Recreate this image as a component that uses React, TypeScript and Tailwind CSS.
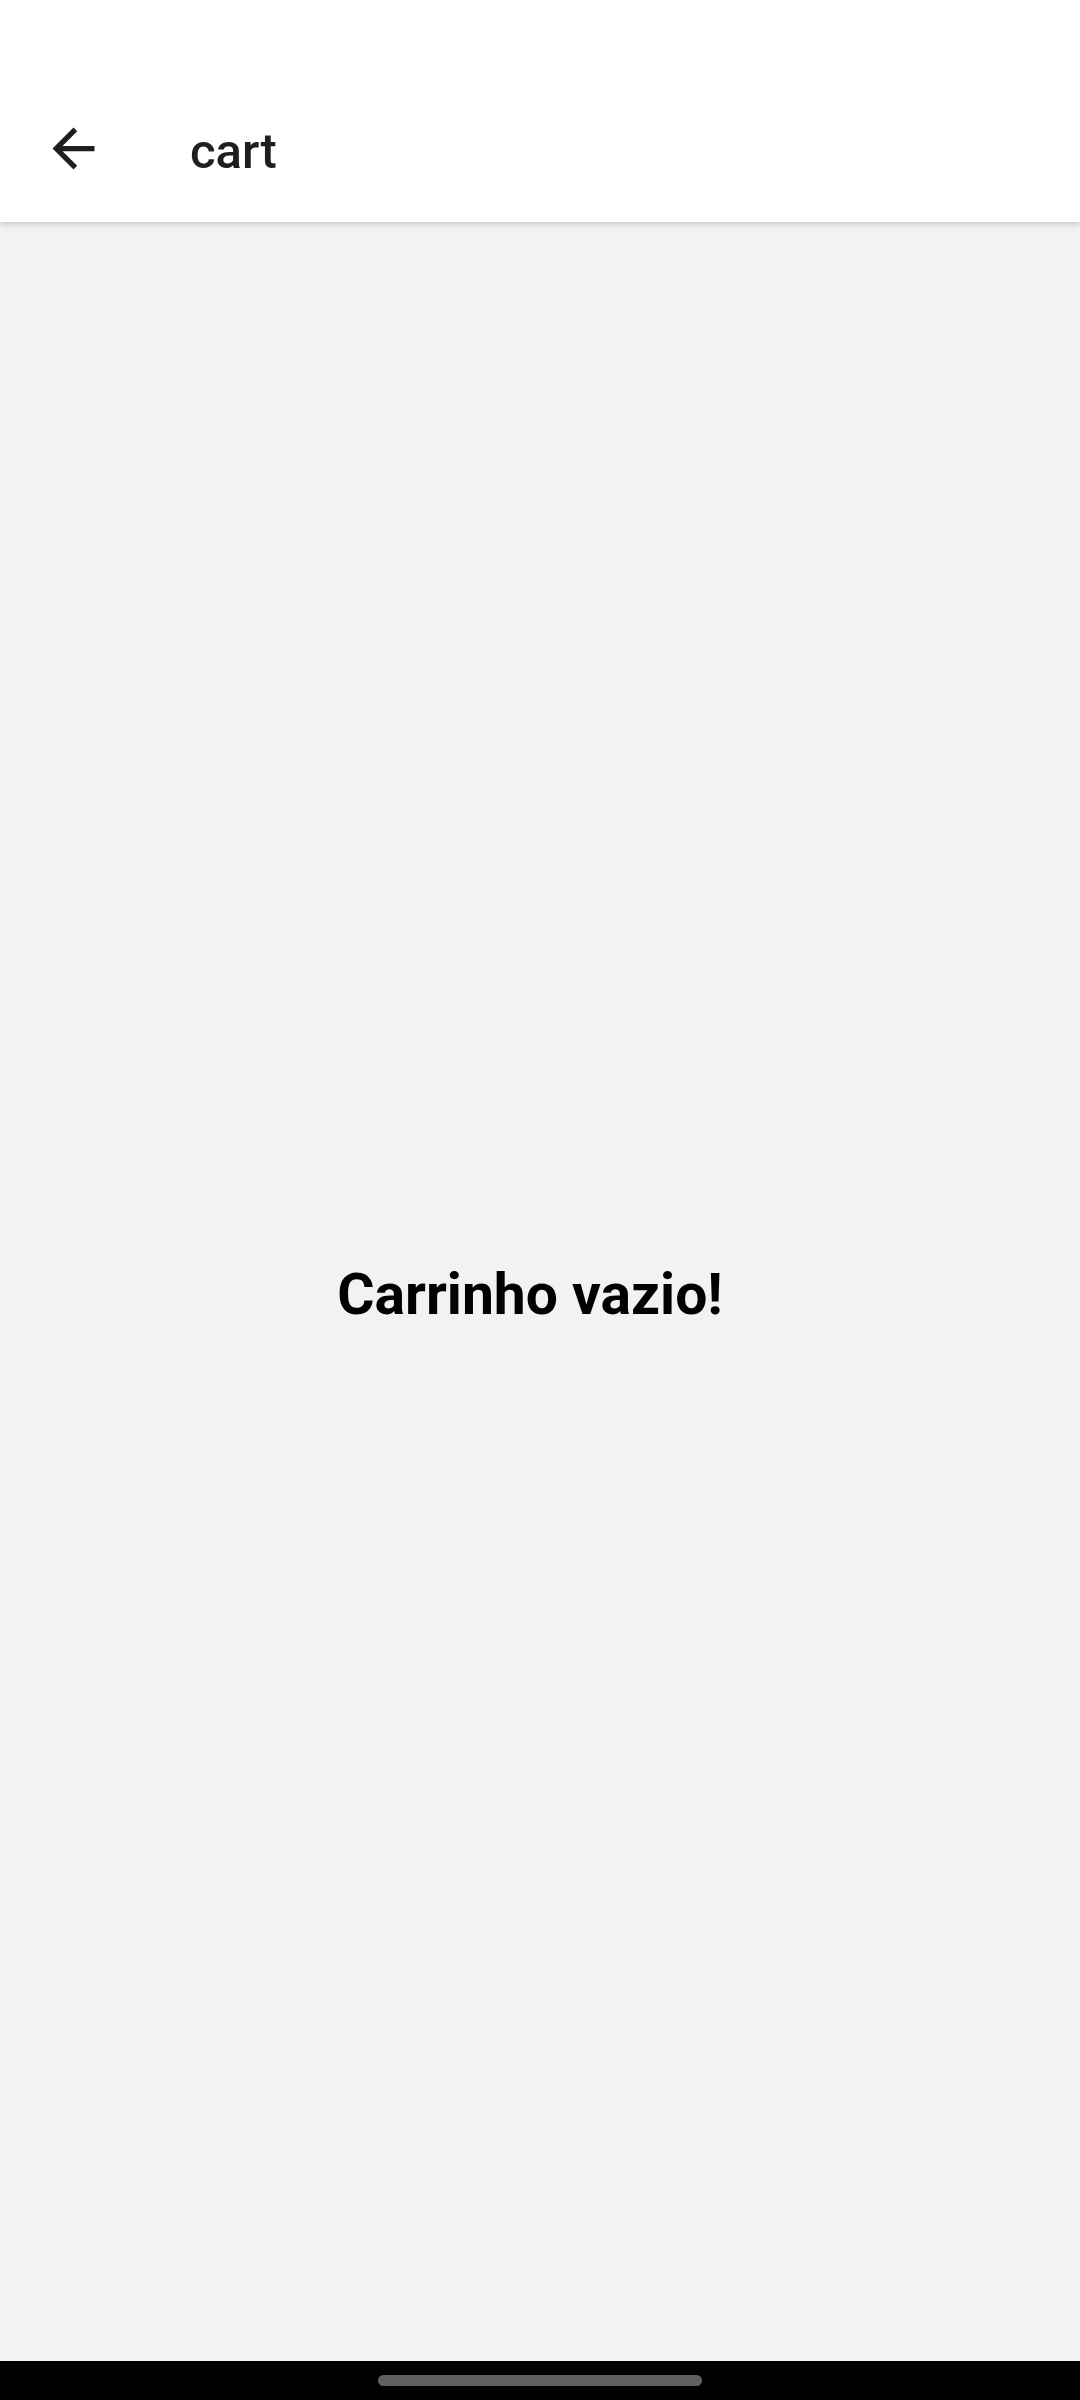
import React from 'react';

const BackArrow: React.FC = () => (
  <svg width="63" height="63" viewBox="0 0 24 24" fill="#1f1f1f">
    <path d="M20 11H7.83l5.59-5.59L12 4l-8 8 8 8 1.41-1.41L7.83 13H20v-2z" />
  </svg>
);

const App: React.FC = () => {
  return (
    <div
      className="flex h-[2400px] w-[1080px] flex-col bg-[#f2f2f2]"
      style={{ fontFamily: 'Roboto, "Noto Sans", sans-serif' }}
    >
      <header className="relative z-10 h-[222px] bg-white pt-[74px] shadow-[0_2px_6px_rgba(0,0,0,0.18)]">
        <div className="flex h-[148px] items-center">
          <button className="ml-[42px] flex h-[63px] w-[63px] items-center justify-center">
            <BackArrow />
          </button>
          <h1 className="ml-[85px] mt-[6px] text-[49px] font-medium leading-none text-[#1f1f1f]">cart</h1>
        </div>
      </header>

      <main className="flex flex-1 items-center justify-center pr-[20px] pt-[6px]">
        <p className="text-[57px] font-bold leading-none text-black">Carrinho vazio!</p>
      </main>

      <div className="flex h-[39px] justify-center bg-black pt-[14px]">
        <div className="h-[11px] w-[324px] rounded-full bg-[#606060]" />
      </div>
    </div>
  );
};

export default App;
